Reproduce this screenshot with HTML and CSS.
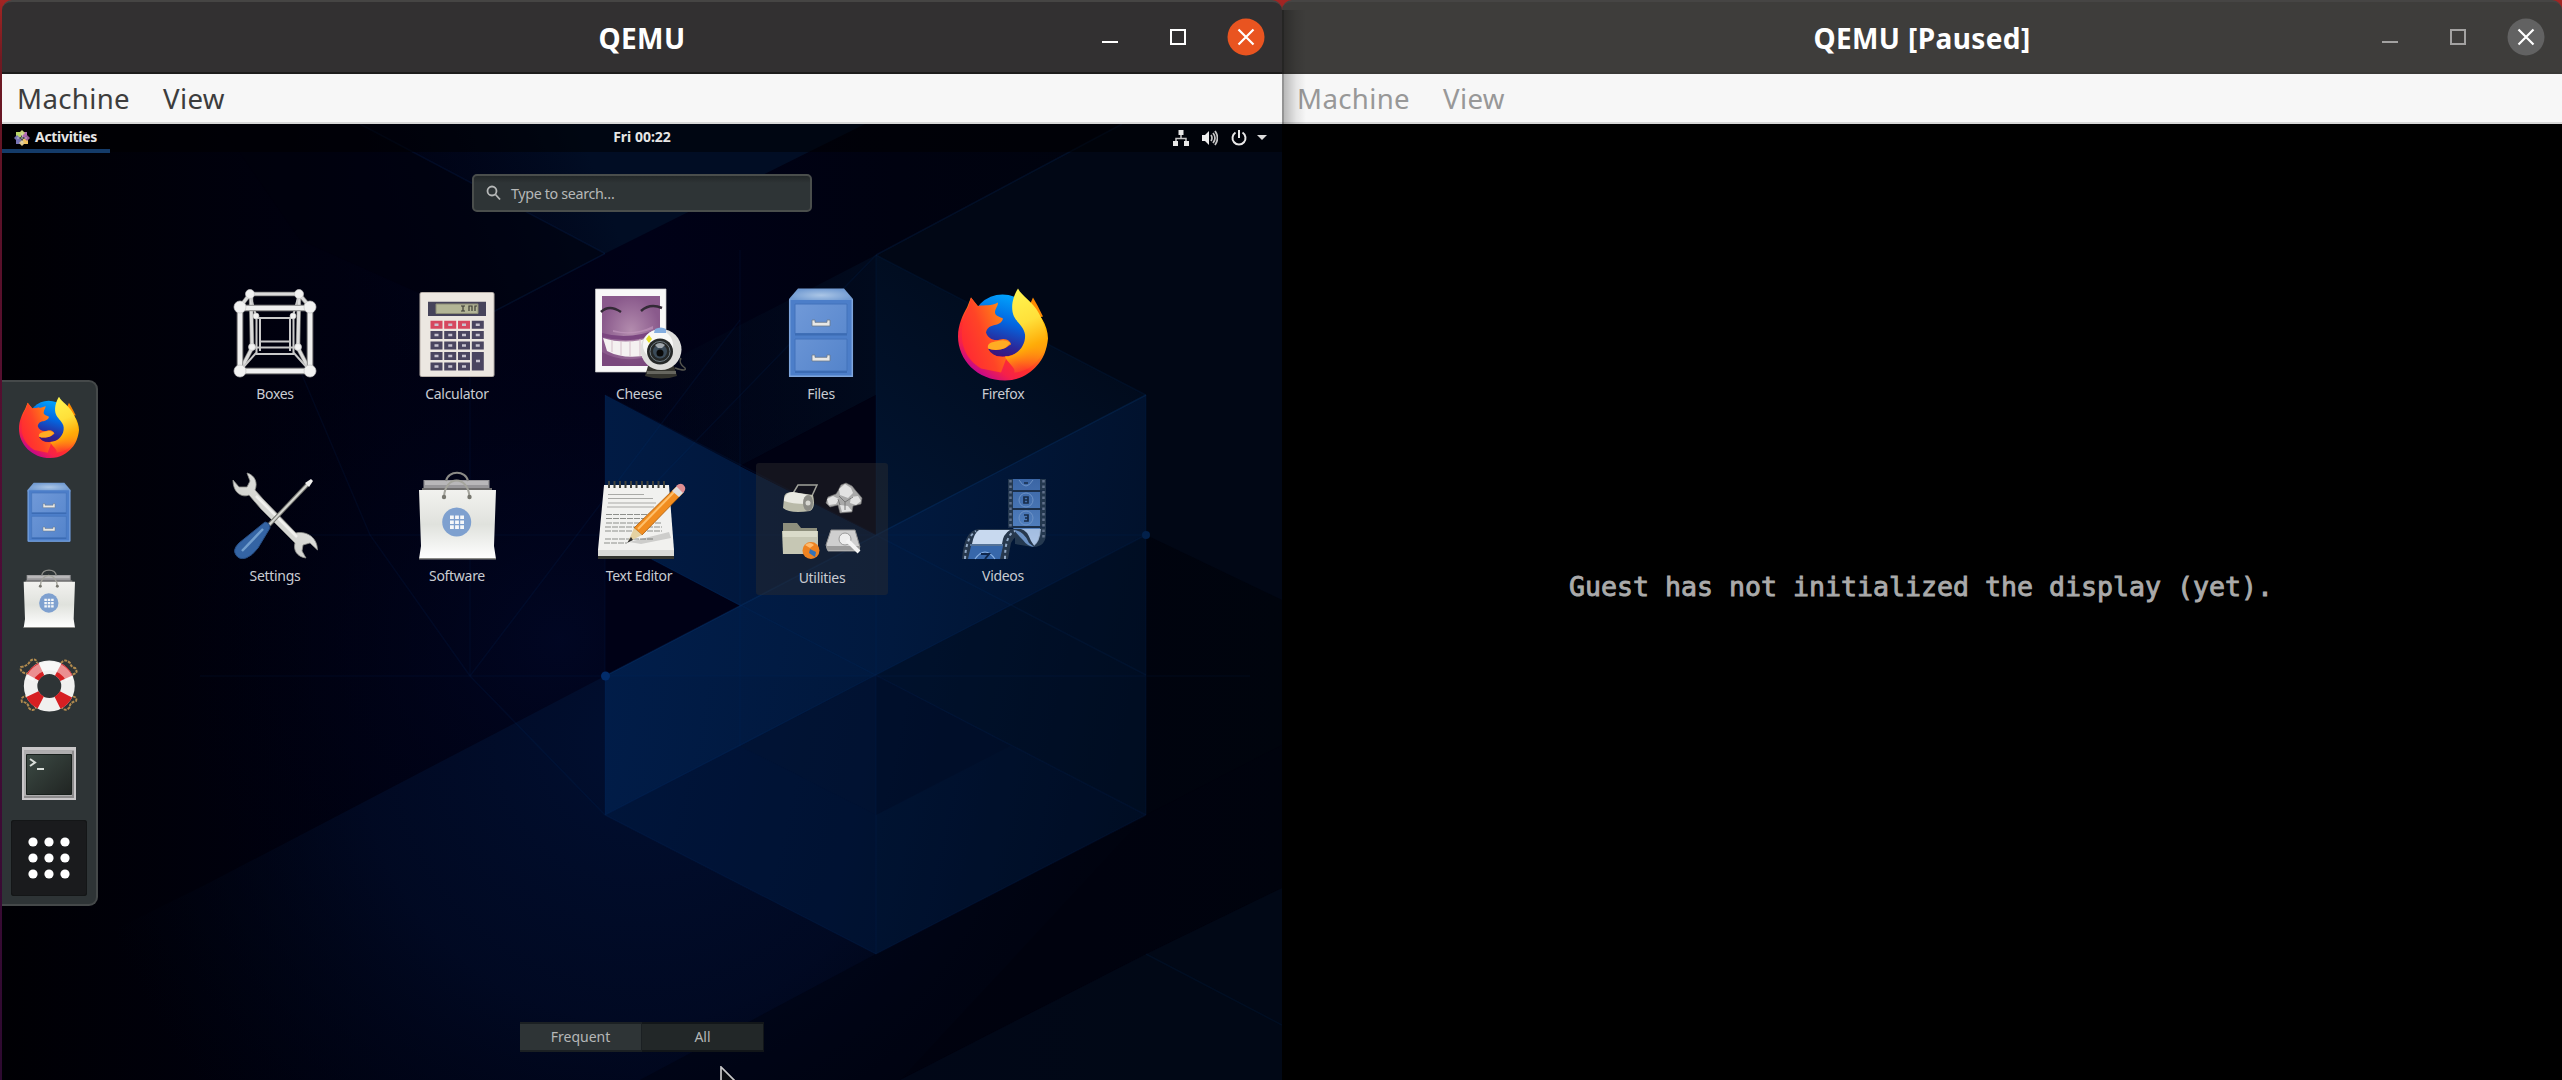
FILE: index.html
```html
<!DOCTYPE html>
<html lang="en">
<head>
<meta charset="utf-8">
<title>QEMU</title>
<link rel="stylesheet" href="styles.css">
</head>
<body>
<svg class="defs" width="0" height="0" aria-hidden="true">
  <defs>
    <linearGradient id="foxBody" x1="0.75" y1="0.1" x2="0.15" y2="0.85">
      <stop offset="0" stop-color="#ffc400"/><stop offset="0.3" stop-color="#ff9a0a"/><stop offset="0.62" stop-color="#ff2f2c"/><stop offset="0.82" stop-color="#f5204a"/><stop offset="1" stop-color="#c4098a"/>
    </linearGradient>
    <linearGradient id="foxFace" x1="0" y1="0.8" x2="1" y2="0.2">
      <stop offset="0" stop-color="#ff2436"/><stop offset="0.45" stop-color="#ff4426"/><stop offset="1" stop-color="#ff9a10"/>
    </linearGradient>
    <linearGradient id="foxTail" x1="0.4" y1="0" x2="0.6" y2="1">
      <stop offset="0" stop-color="#fff44f"/><stop offset="0.4" stop-color="#ffe03a"/><stop offset="0.7" stop-color="#ffac08"/><stop offset="1" stop-color="#ff8a12" stop-opacity="0"/>
    </linearGradient>
    <linearGradient id="globe" x1="0.7" y1="0" x2="0.4" y2="1">
      <stop offset="0" stop-color="#00a8ff"/><stop offset="0.45" stop-color="#0366e0"/><stop offset="0.8" stop-color="#2b2799"/><stop offset="1" stop-color="#3f1377"/>
    </linearGradient>
    <linearGradient id="drawer" x1="0" y1="0" x2="1" y2="1"><stop offset="0" stop-color="#7099d8"/><stop offset="1" stop-color="#5484cb"/></linearGradient>
    <radialGradient id="cabTop"><stop offset="0" stop-color="#abc6e6"/><stop offset="1" stop-color="#729bd2"/></radialGradient>
    <linearGradient id="bag" x1="0" y1="0" x2="0" y2="1"><stop offset="0" stop-color="#f2f2ef"/><stop offset="0.5" stop-color="#e0e2dd"/><stop offset="1" stop-color="#ffffff"/></linearGradient>
    <linearGradient id="steel" x1="0" y1="1" x2="1" y2="0"><stop offset="0" stop-color="#bcbdb8"/><stop offset="1" stop-color="#f3f3f1"/></linearGradient>
    <radialGradient id="cheese"><stop offset="0" stop-color="#b38cae"/><stop offset="1" stop-color="#8a5a8c"/></radialGradient>
    <linearGradient id="term" x1="0" y1="0" x2="1" y2="1"><stop offset="0" stop-color="#3c4a44"/><stop offset="1" stop-color="#202422"/></linearGradient>
    <linearGradient id="film" x1="0" y1="0" x2="0" y2="1"><stop offset="0" stop-color="#3b66a5"/><stop offset="0.7" stop-color="#4f7dbc"/><stop offset="1" stop-color="#88abd9"/></linearGradient>

    <symbol id="firefox" viewBox="0 1.5 96 96">
      <path fill="#ff8a00" d="M74 22 78 13 83 22 88 32 80 34z"/>
      <path fill="url(#foxBody)" d="M16 13 23 22.500C35 12 60 12 72 19 84 26 93 41 93 54 92 65 88 75 82 81 75 89 65 96 50 96 22 96 3 75 3 52 3 40 8 30 12 23z"/>
      <circle cx="47.500" cy="41" r="31" fill="url(#globe)"/>
      <path fill="url(#foxFace)" d="M16 13 23 21.500C30 20 36 22 43 18 43 22 40 24 40 28 40 31 44 32 48 34 47 39 42 40 38 41 34 42 32 44 31 48 33 54 39 57 45 55 51 53 56 57 56 60 53 61 52 64 45 65 40 66 36 65 33 64 36 70 43 74 52 72L46 88 26 84C10 74 6 60 7 45 8 35 9 29 13 23z"/>
      <path fill="#ffac23" d="M33 64C32 59 36 58 40 57 45 56 49 54 55.500 58.500 53 60 52 64 45 65 40 66 36 65 33 64z"/>
      <path fill="url(#foxTail)" d="M63 4C67 12 78 17 84 29 91 42 93 54 89 65 84 79 71 88 59 88 62 84 52 78 50 72 62 72 71 61 70 50 69 42 62 38 59 32 55 23 58 12 63 4z"/>
    </symbol>

    <symbol id="files" viewBox="0 0 96 96">
      <path fill="url(#cabTop)" d="M25 2.500h46l9 10.500v3H16v-3z"/>
      <path fill="#4c7ec9" d="M16 14h64v77H16z"/>
      <path fill="none" stroke="#7fa6dd" stroke-width="1.500" d="M16.700 13.500v76.700h62.600V13.500"/>
      <path fill="url(#drawer)" stroke="#4273bb" stroke-width="1" d="M22 18h52v29.500H22zM22 53h52v32H22z"/>
      <path stroke="#3c6cb4" stroke-width="2" d="M22 48.500h52M22 86h52"/>
      <path fill="#e8e8e6" stroke="#6c7889" stroke-width=".8" d="M39 34h3v2.300h12V34h3v6H39zM39 69h3v2.300h12V69h3v6H39z"/>
    </symbol>

    <symbol id="software" viewBox="0 0 96 96">
      <path fill="#98979a" d="M14.500 12h66v11h-66z"/><path fill="#b8b7b9" d="M16 13h63v4H16z"/>
      <path fill="none" stroke="#8b8b87" stroke-width="2" d="M37 13C39 2 57 2 59 13"/>
      <path fill="#6d6c6c" d="M13 20h70v3H13z"/>
      <path fill="url(#bag)" d="M10 22h77L85 78l2 13H10l2-13z"/>
      <path fill="#8c8c88" d="M10 90h77v1.500H10z"/>
      <circle cx="47.700" cy="54" r="14.500" fill="#7ea0cf"/>
      <path fill="#f5f7f9" d="M41 47.500h3.800v3.600H41zM46.100 47.500h3.800v3.600h-3.800zM51.200 47.500H55v3.600h-3.800zM41 52.400h3.800V56H41zM46.100 52.400h3.800V56h-3.800zM51.200 52.400H55V56h-3.800zM41 57.300h3.800v3.600H41zM46.100 57.300h3.800v3.600h-3.800zM51.200 57.300H55v3.600h-3.800z"/>
      <path fill="none" stroke="#a4a49c" stroke-width="2" d="M35 29C36 7 59 7 60.500 29"/>
      <circle cx="35" cy="29" r="2.200" fill="#77776f"/><circle cx="60.500" cy="29" r="2.200" fill="#77776f"/>
    </symbol>
  </defs>
</svg>

<div class="window active">
  <header class="titlebar">
    <span class="caption">QEMU</span>
    <div class="controls">
      <i class="min"></i><i class="max"></i>
      <svg class="close" viewBox="0 0 38 38"><circle cx="19" cy="19" r="18.500"/><path d="M11.500 11.500l15 15m0-15l-15 15"/></svg>
    </div>
  </header>
  <nav class="menubar"><span>Machine</span><span>View</span></nav>
  <main class="screen">
    <svg class="wallpaper" viewBox="2 124 1280 956" preserveAspectRatio="none">
      <defs>
        <linearGradient id="base" x1="0" y1="0" x2="1" y2="0"><stop offset="0" stop-color="#000004"/><stop offset="0.3" stop-color="#000112"/><stop offset="0.5" stop-color="#000117"/><stop offset="0.7" stop-color="#000210"/><stop offset="1" stop-color="#00040d"/></linearGradient>
        <radialGradient id="tint" gradientUnits="userSpaceOnUse" cx="560" cy="640" r="400"><stop offset="0" stop-color="#010724" stop-opacity=".9"/><stop offset="1" stop-color="#000110" stop-opacity="0"/></radialGradient>
        <radialGradient id="glow" gradientUnits="userSpaceOnUse" cx="640" cy="740" r="560"><stop offset="0" stop-color="#010f30"/><stop offset="0.5" stop-color="#010a24" stop-opacity=".9"/><stop offset="1" stop-color="#000614" stop-opacity="0"/></radialGradient>
        <linearGradient id="hex" gradientUnits="userSpaceOnUse" x1="605" y1="660" x2="1146" y2="780"><stop offset="0" stop-color="#011e4b"/><stop offset="0.5" stop-color="#01193e"/><stop offset="1" stop-color="#011029"/></linearGradient>
        <linearGradient id="band" gradientUnits="userSpaceOnUse" x1="605" y1="520" x2="876" y2="520"><stop offset="0" stop-color="#011b44"/><stop offset="1" stop-color="#011537"/></linearGradient>
        <linearGradient id="wing" gradientUnits="userSpaceOnUse" x1="820" y1="640" x2="1080" y2="300"><stop offset="0" stop-color="#011b42"/><stop offset="0.35" stop-color="#011430"/><stop offset="1" stop-color="#010a1a"/></linearGradient>
        <linearGradient id="topface" gradientUnits="userSpaceOnUse" x1="340" y1="300" x2="606" y2="200"><stop offset="0" stop-color="#000112" stop-opacity="0"/><stop offset="1" stop-color="#010d24"/></linearGradient>
        <linearGradient id="beam" gradientUnits="userSpaceOnUse" x1="600" y1="0" x2="876" y2="0"><stop offset="0" stop-color="#010a1d" stop-opacity="0"/><stop offset="1" stop-color="#010a1d"/></linearGradient>
      </defs>
      <path fill="url(#base)" d="M2 124h1280v956H2z"/>
      <path fill="url(#tint)" d="M2 124h1280v956H2z"/>
      <path fill="url(#glow)" d="M605 676L205 885 2 985V1080H900L1146 815 876 675z"/>
      <path fill="url(#topface)" d="M360 124H865L605 253.500 330 400 240 330 300 124z"/>
      <path fill="#00010c" d="M220 124H360L605 253.500 480 320 300 240z" opacity=".55"/>
      <path fill="#010715" d="M876 255L1122 124H1282V600L1146 535 876 395z"/>
      <path fill="url(#beam)" d="M605 395L876 255V395L740 466z"/>
      <path fill="url(#band)" d="M605 395L740 466 876 535 605 676 740 606 605 535z"/>
      <path fill="url(#wing)" d="M876 255L1146 395V535L876 676 605 676 876 535z"/>
      <path fill="#000112" d="M876 395L740 466 876 535z"/>
      <path fill="#000116" d="M605 535L740 606 605 676z"/>
      <path fill="url(#hex)" d="M605 676L876 535 1146 395V815L876 954 605 815z" opacity=".92"/>
      <path fill="#010f29" opacity=".55" d="M740 746L876 675 1010 746 876 815z"/>
      <path fill="#010a22" opacity=".35" d="M605 815L740 746 876 815V954z"/>
      <path fill="#010a1e" opacity=".3" d="M876 675L1146 815 876 954z"/>
      <path fill="#010a1a" opacity=".4" d="M1010 606L1146 535V815L876 675z"/>
      <path fill="#00020e" opacity=".5" d="M876 954L1146 815 1282 745V888L1146 954 900 1080H640z"/>
      <path fill="#010b1d" opacity=".6" d="M1146 954L1282 888V1080H900z"/>
      <g fill="none" stroke="#0b3a78" stroke-opacity=".3" stroke-width="1.500">
        <path d="M605 676L1146 395"/><path d="M360 124L605 253.500" opacity=".6"/><path d="M876 255L1122 124M430 345L605 253.500" opacity=".7"/>
        <path d="M200 676H1250M300 535H1146M605 395V815M876 255V954M1146 395V815M740 250V746M470 360V676" opacity=".35"/>
        <path d="M605 395L876 535 1146 675M876 255L1146 395M605 535L1146 815M605 815L1146 535M605 815L876 954 1146 815M470 676L740 320M470 676L370 535 300 370M605 535L876 255M470 676L605 815M1146 954L1282 1025" opacity=".4"/>
      </g>
      <circle cx="605.500" cy="676" r="4.500" fill="#022c6a"/><circle cx="1146" cy="535" r="4" fill="#02204a"/>
    </svg>

    <div class="topbar">
      <div class="activities">
        <svg class="logo" viewBox="0 0 16 16"><path fill="#b8d765" d="M2 2h5v5H2z"/><path fill="#b06ab2" d="M8 2h5v5H8z"/><path fill="#7774b4" d="M2 9h5v5H2z"/><path fill="#f1c25e" d="M9 9h5v5H9z"/><path fill="#c8d27c" d="M8 0l3 3-3 3-3-3z"/><path fill="#e0c88c" d="M8 10l3 3-3 3-3-3z"/><path fill="#7774b4" d="M0 8l3-3 3 3-3 3z"/><path fill="#9a5f9b" d="M10 8l3-3 3 3-3 3z"/><path stroke="#ddd" stroke-width=".7" d="M8 3v10M3 8h10"/></svg>
        <b>Activities</b>
      </div>
      <b class="clock">Fri 00:22</b>
      <div class="tray">
        <svg viewBox="0 0 16 16"><path fill="#e8e8e8" d="M5.500 0h5v5h-5zM0 11h5v5H0zM11 11h5v5h-5z"/><path fill="none" stroke="#c6c6c6" stroke-width="1.500" d="M8 5v3M3 11V8.500h10V11"/></svg>
        <svg viewBox="0 0 16 16"><path fill="#eee" d="M0 5h3l4-4v14l-4-4H0z"/><path fill="none" stroke="#c6c6c6" stroke-width="1.700" d="M9 5q2 3 0 6M11 3q4 5 0 10M13 1q5 7 0 14"/></svg>
        <svg viewBox="0 0 16 16"><path fill="none" stroke="#e8e8e8" stroke-width="2" d="M8 0v8M4.500 2.500a6.500 6.500 0 1 0 7 0"/></svg>
        <svg class="arrow" viewBox="0 0 10 16"><path fill="#ddd" d="M0 5h10l-5 5z"/></svg>
      </div>
    </div>

    <div class="overview">
      <aside class="dash">
        <span><svg><use href="#firefox"/></svg></span>
        <span><svg><use href="#files"/></svg></span>
        <span><svg><use href="#software"/></svg></span>
        <span><svg viewBox="0 0 64 64">
          <path fill="none" stroke="#b08a4e" stroke-width="2" stroke-dasharray="3 1" d="M12 20q-10-1-8-7 7-1 9-6 6-4 7 2M44 9q4-5 9 0 1 4 5 5 5 6-6 7M11 42q-8 0-6 6 6 0 7 6 4 5 8-2M52 42q9 0 7 5-7 2-6 6-5 6-9-1"/>
          <circle cx="32.300" cy="32" r="18.700" fill="none" stroke="#f0f0ef" stroke-width="13.500"/>
          <circle cx="32.300" cy="32" r="18.700" fill="none" stroke="#d61f22" stroke-width="13.500" stroke-dasharray="12 17.370" stroke-dashoffset="-8.700"/>
          <path fill="#fff" opacity=".5" d="M9 24A25 25 0 0 1 56 24l-7 3A18 18 0 0 0 16 27z"/>
        </svg></span>
        <span><svg viewBox="0 0 64 64"><path fill="#c9c7c9" d="M5 7h54v53H5z"/><path fill="#8b8a8b" d="M7 10.500h50V58H7z"/><path fill="#aeadae" d="M7 10.500h48V56H7z"/><path fill="url(#term)" stroke="#18201c" d="M9.500 14.500h45v40h-45z"/><path fill="none" stroke="#d9ded9" stroke-width="2" d="M13 19l5 3.500-5 3.500M20 29h7"/></svg></span>
        <span class="grid-button"><svg viewBox="0 0 64 64"><g fill="#fff"><circle cx="16" cy="16" r="4.600"/><circle cx="32" cy="16" r="4.600"/><circle cx="48" cy="16" r="4.600"/><circle cx="16" cy="32" r="4.600"/><circle cx="32" cy="32" r="4.600"/><circle cx="48" cy="32" r="4.600"/><circle cx="16" cy="48" r="4.600"/><circle cx="32" cy="48" r="4.600"/><circle cx="48" cy="48" r="4.600"/></g></svg></span>
      </aside>

      <section class="center">
        <div class="search"><svg viewBox="0 0 16 16"><circle cx="6" cy="6" r="4.500"/><path d="M9.500 9.500L14 14.500"/></svg><span>Type to search…</span></div>
        <div class="apps">
          <div class="app">
            <svg viewBox="0 0 96 96"><g fill="none" stroke="#777" stroke-width="4.500"><path d="M23 8h49M13 21L23 8M83 21L72 8M13 85L25 62M83 85L71 62M24 10L25 61M72 10L71 61"/></g>
              <g fill="none" stroke="#dcdcdc" stroke-width="3"><path d="M23 8h49M13 21L23 8M83 21L72 8M13 85L25 62M83 85L71 62M24 10L25 61M72 10L71 61"/></g>
              <g fill="none" stroke="#c9c9c9" stroke-width="2"><path d="M23 8l6 22M72 8l-6 22M13 85l17-19M83 85L66 66M29.500 30v37M33 32v33M66.500 30v37M63 32v33M29 32h37M25 61.500h46M29 68h38M32 55.500h32"/></g>
              <g fill="none" stroke="#9b9b9b" stroke-width="6.500"><path d="M13 22h70v63H13z"/></g><g fill="none" stroke="#efefef" stroke-width="4"><path d="M13 22h70v63H13z"/></g>
              <g fill="#f2f2f2" stroke="#c4c4c4" stroke-width=".7"><circle cx="13" cy="21" r="6"/><circle cx="83" cy="21" r="6"/><circle cx="13" cy="85" r="6"/><circle cx="83" cy="85" r="6"/><circle cx="23" cy="8" r="4.500"/><circle cx="72" cy="8" r="4.500"/><circle cx="29" cy="30" r="3"/><circle cx="66" cy="30" r="3"/><circle cx="25" cy="61" r="3.500"/><circle cx="71" cy="61" r="3.500"/></g></svg>
            <span>Boxes</span>
          </div>
          <div class="app">
            <svg viewBox="0 0 96 96"><rect x="11" y="6.500" width="74" height="84" rx="1.500" fill="#ece7e1" stroke="#b7afa9"/><path fill="#46435a" d="M19 15.700h58V30H19z"/><path fill="#b3b596" stroke="#8c8c75" d="M27 18h42v9.500H27z"/>
              <path fill="none" stroke="#3b3b35" stroke-width="1.200" d="M52 20h4M54 20v5M52 25h4M60 25v-5h3v5M66 25v-5h2"/>
              <g fill="#d6485f"><path d="M21.500 34.700h12v8h-12zM35.200 34.700h12v8h-12zM49 34.700h12v8H49z"/></g>
              <g fill="#4a4560"><path d="M62.800 34.700h12v8h-12zM21.500 45h12v8h-12zM35.200 45h12v8h-12zM49 45h12v8H49zM62.800 45h12v8h-12zM21.500 55.500h12v8h-12zM35.200 55.500h12v8h-12zM49 55.500h12v8H49zM62.800 55.500h12v8h-12zM21.500 66h12v8h-12zM35.200 66h12v8h-12zM49 66h12v8H49zM62.800 66h12v18.500h-12zM21.500 76.500h12v8h-12zM35.200 76.500h12v8h-12zM49 76.500h12v8H49z"/></g>
              <path stroke="#c8c3d0" stroke-width="2.500" stroke-dasharray="4 9.750" d="M25.500 38.700H75M25.500 49H75M25.500 59.500H75M25.500 70H60M25.500 80.500H60M67 75h4"/></svg>
            <span>Calculator</span>
          </div>
          <div class="app">
            <svg viewBox="0 0 96 96"><path fill="#f8f8f8" stroke="#c9c9c9" stroke-width=".7" d="M4.500 3H75v83H4.500z"/><path fill="url(#cheese)" d="M11 10h58v70H11z"/>
              <path fill="#7b4680" d="M11 47q28 8 58-5v5q-28 12-58 4z"/><path fill="#c49ac0" d="M22 44q20 6 40-4v3q-20 7-40 3z" opacity=".6"/>
              <path fill="#f4f1f1" d="M12 52q25 8 52-2l-6 19q-25 5-42-4z"/><path stroke="#d5bfca" stroke-width="1" d="M21 54v12M30 55v14M39 55v15M49 53v17"/>
              <path fill="#6d3b71" d="M11 66q20 12 48 4l-3 10H11z" opacity=".55"/>
              <path fill="none" stroke="#332a36" stroke-width="2.500" d="M10 26q8-8 20 0M50 25q9-8 21-3"/>
              <path fill="none" stroke="#55564f" stroke-width="1.500" d="M84 82q12 4 10 0-7-5-4-10"/><path fill="#35352f" d="M57 80h26l3 10q-15 5-32 0z"/><path fill="#66665f" d="M56 85h29v3H56z"/>
              <circle cx="70" cy="63.500" r="20.500" fill="#dededc"/><circle cx="67" cy="59" r="15" fill="#f8f8f7"/><circle cx="69" cy="65.500" r="13" fill="#252828"/><circle cx="69" cy="65.500" r="10" fill="none" stroke="#6f7b83"/><circle cx="69" cy="65.500" r="7" fill="#3a4a58"/><circle cx="69" cy="67" r="3.500" fill="#090909"/><path fill="#a1a8ae" d="M64 59q5-4 10 0l-3 3h-4z"/>
              <path fill="#84aee0" d="M64 43q6-3 11 0v4H63z"/><path fill="#e6e02b" d="M58 49l3 4-3 4-3-4z"/></svg>
            <span>Cheese</span>
          </div>
          <div class="app"><svg><use href="#files"/></svg><span>Files</span></div>
          <div class="app"><svg><use href="#firefox"/></svg><span>Firefox</span></div>

          <div class="app">
            <svg viewBox="0 0 96 96"><path fill="url(#steel)" stroke="#8f908b" stroke-width=".8" d="M20 5C28 7 31 15 28 22L36 31 69 65C77 63 90 67 90.500 82L83 75 76 77 75 83 79 90C70 89 66 82 68 75L34 41 22 27C15 30 6 25 6 12L12 19 20 19 23 13z"/>
              <path fill="none" stroke="#f7f7f5" stroke-width="2.500" opacity=".8" d="M29 28L70 69"/>
              <path stroke="#74756f" stroke-width="4" d="M42 57L80 17"/><path stroke="#d5d6d1" stroke-width="2" d="M42 57L81 16"/><path fill="#f0f0ee" d="M78 15l6-4 2 2-4 6z"/>
              <path fill="#3464a4" stroke="#264d83" d="M38 54q5 1 5 6L31 80q-6 8-12 10-7 2-10-3-4-5 3-12z"/><path stroke="#729fcf" stroke-width="2.500" d="M36 61L15 83"/></svg>
            <span>Settings</span>
          </div>
          <div class="app"><svg><use href="#software"/></svg><span>Software</span></div>
          <div class="app">
            <svg viewBox="0 0 96 96"><path fill="#b5b6b2" d="M7 82h76v7H7z"/><path fill="#34352f" d="M7 88h76v3H7z"/><path fill="#f1f1ef" d="M13 17h65l5 65H7z"/><path fill="#dadad6" d="M7 82h76v6H7z"/>
              <path fill="none" stroke="#41423d" stroke-width="2" d="M18 20v-7M23.500 20v-7M29 20v-7M34.500 20v-7M40 20v-7M45.500 20v-7M51 20v-7M56.500 20v-7M62 20v-7M67.500 20v-7M73 20v-7"/>
              <g stroke="#a9aaa7" stroke-width="1.200"><path d="M17 26.500h36M17 30.500h45M17 35h48M16 39h47"/></g><g stroke="#8d8f8b" stroke-width="1.200" stroke-dasharray="6 1"><path d="M15 46.500h42M15 50.500h50M15 55h55M14 59h57M14 63h57M14 71h48M13 75h23"/></g>
              <path fill="#000" opacity=".15" d="M38 74L78 64 80 70 50 76z"/>
              <path fill="#f18d20" stroke="#a95a09" stroke-width=".8" d="M85 19l7 6-41 42-8-7z"/><path stroke="#ffc06b" stroke-width="2" d="M84 23L47 61"/><path fill="#e5d2a2" d="M43 60l8 7-12 6-2 1z"/><path fill="#303030" d="M40 69l2 3-6 3z"/><path fill="#ddd" d="M81 23l5-5 7 6-5 5z"/><path fill="#df8d91" d="M85 18q6-5 9 1 1 3-2 6z"/></svg>
            <span>Text Editor</span>
          </div>
          <div class="app folder">
            <svg viewBox="0 0 132 90"><path fill="none" stroke="#a0a19a" stroke-width="1.500" d="M36 32l6-10h19l-6 13"/><path fill="#b9baa9" d="M28 35q0-6 8-6l21 3q3 13-3 16-20 3-27-3z"/><path fill="#e9e9e2" d="M28 36q2-7 9-7l16 3q-3 3-3 9-14 0-22-3z"/><ellipse cx="52" cy="40" rx="5" ry="8" fill="#8c8c86"/><circle cx="52" cy="40" r="2.500" fill="#d8d8d2"/>
              <path fill="#a9a9a9" stroke="#747474" stroke-width=".6" d="M82 28l3-6 5-2 6 3 4 5 6 7-1 6-8 2-1 6-12 1-2-8-8 2-4-4 2-6 8-3z"/><path fill="#e2e2e2" d="M83 26l6-5 6 4 2 5-5 5-8-3zM71 36l6-3 6 3-3 5-7 1zM95 34l7-1 3 5-5 4-6-2zM84 42l8 1 4 5-10 1z"/><path fill="none" stroke="#777" stroke-width="1" d="M83 33l6 6v8M89 39l8-5M82 36l2 6"/>
              <path fill="#8e8f7d" d="M27 60h14l4 5h16v8H27z"/><path fill="#c6c7b4" d="M26 68h36v23H27z"/><path fill="#dadbca" d="M27 68h34v6H27z"/><circle cx="55" cy="87.500" r="8.500" fill="#ee8220"/><path fill="#3472b7" d="M54 86l6 3-1 5-6-4z"/><path fill="#ffba6c" d="M49 82q5-4 9 0l-4 3z"/>
              <path fill="#cfcfcf" stroke="#8e8e8e" d="M75 67h24l5 17-3 4H72l-2-6z"/><path fill="#9b9b9b" d="M70 83h34v4H71z"/><circle cx="89" cy="76" r="6" fill="#eee" stroke="#999"/><path stroke="#f4f4f4" stroke-width="4" d="M91 77l12 12"/></svg>
            <span>Utilities</span>
          </div>
          <div class="app">
            <svg viewBox="0 0 96 96"><path fill="#24384f" d="M53 11h38v52q1 16-13 16L60 76V60h-7z"/><path fill="url(#film)" d="M58 11h27v50q-1 13-7 17-9-3-20-18z"/>
              <path stroke="#1b2f4a" stroke-width="1.800" d="M53 23h37M53 41h37M53 59h37"/><g stroke="#60708a" stroke-width="2.500" stroke-dasharray="2.500 3"><path d="M55.500 12v47M88.500 12v60"/></g>
              <g fill="none" stroke="#6c92c6" stroke-width="1"><circle cx="71" cy="32" r="7"/><circle cx="71" cy="50" r="7"/><path d="M64 12q7 12 14 0"/></g><path fill="none" stroke="#172c4a" stroke-width="1.700" d="M69 15h4M69 29h4v6h-4zv3h4M69 47h4v6h-4M70 50h3"/>
              <path fill="#b5cbe8" d="M60 61h26q-1 13-7 17-9-4-19-17z" opacity=".8"/>
              <path fill="#27384d" d="M7 91Q9 62 24 61H66Q72 62 76 73L80 79 71 75Q64 61 56 75L53 91z"/>
              <path fill="#c8d9ef" d="M24 62h31q-7 4-8 14H17q2-11 7-14z"/><path fill="#3767aa" d="M16 78h32l-3 13H13z"/><path fill="#6b91c4" d="M59 62q10 1 15 13l5 4q-7-1-11-7-6-6-9-10z"/>
              <path stroke="#91a8c5" stroke-width="2" stroke-dasharray="3 3" fill="none" d="M10 91Q11 69 21 63M50 91Q50 67 60 63"/><path fill="none" stroke="#85aee2" stroke-width="1.200" d="M20 91q10-14 20 0M15 77h33"/><path fill="none" stroke="#0f274d" stroke-width="2" d="M26 86h8l-4 5"/></svg>
            <span>Videos</span>
          </div>
        </div>
        <div class="switcher"><span>Frequent</span><span class="on">All</span></div>
      </section>
    </div>
    <svg class="cursor" viewBox="0 0 18 26"><path fill="#0b0d12" stroke="#c9c9c9" stroke-width="1.700" d="M1 1v22l5-5 4 9 4-2-4-8h7z"/></svg>
  </main>
</div>

<div class="window paused">
  <header class="titlebar">
    <span class="caption">QEMU [Paused]</span>
    <div class="controls">
      <i class="min"></i><i class="max"></i>
      <svg class="close" viewBox="0 0 38 38"><circle cx="19" cy="19" r="18.500"/><path d="M11.500 11.500l15 15m0-15l-15 15"/></svg>
    </div>
  </header>
  <nav class="menubar"><span>Machine</span><span>View</span></nav>
  <main class="screen blank"><p>Guest has not initialized the display (yet).</p></main>
</div>
</body>
</html>
```
FILE: styles.css
```css
* { box-sizing: border-box; }
body {
  margin: 0;
  width: 2562px;
  height: 1080px;
  padding-left: 2px;
  display: flex;
  overflow: hidden;
  background: linear-gradient(#a32523 0, #701a22 60px, #5c1128 200px, #4b0c38 600px, #2d0a31 1080px);
  font-family: "Noto Sans", "Open Sans", sans-serif;
}
.defs { position: absolute; }
.window { width: 1280px; flex: none; display: flex; flex-direction: column; }

.titlebar {
  position: relative;
  height: 74px;
  flex: none;
  display: grid;
  grid-template-columns: 1fr auto 1fr;
  align-items: center;
  border-top: 2px solid #464544;
  border-bottom: 2px solid #1d1c1c;
  border-radius: 10px 10px 0 0;
  background: #323031;
}
.caption { grid-column: 2; font-size: 28px; font-weight: 700; line-height: 38px; letter-spacing: .4px; color: #fff; padding-top: 1px; }
.controls { grid-column: 3; justify-self: end; display: flex; align-items: center; padding-right: 17px; }
.min { width: 16px; height: 2px; background: #fff; margin: 10px 52px 0 0; }
.max { width: 16px; height: 16px; border: 2px solid #fff; margin-right: 41px; }
.close { width: 38px; height: 38px; display: block; }
.close circle { fill: #e95420; }
.close path { stroke: #fff; stroke-width: 2.2; }

.menubar {
  height: 50px;
  flex: none;
  display: flex;
  gap: 33px;
  padding: 4px 15px 0;
  background: #f7f7f7;
  border-bottom: 2px solid #d8d8d8;
  color: #3d3d3d;
  font-size: 27.6px;
  line-height: 40px;
  letter-spacing: .35px;
}

.paused { position: relative; }
.paused::before {
  content: "";
  position: absolute;
  z-index: 2;
  inset: 10px auto auto 0;
  width: 24px;
  height: 114px;
  background: linear-gradient(90deg, rgba(0,0,0,.4) 0 2px, rgba(0,0,0,.25) 2px, rgba(0,0,0,.08) 14px, transparent);
}
.paused .titlebar { background: #3e3d3b; border-bottom-color: #3a3937; }
.paused .min { background: #a3a2a1; }
.paused .max { border-color: #a3a2a1; }
.paused .close circle { fill: #626262; }
.paused .menubar { color: #989898; }

.screen { position: relative; flex: 1; overflow: hidden; background: #000; }
.blank { padding-top: 445px; }
.blank p {
  margin: 0 2px 0 0;
  text-align: center;
  white-space: nowrap;
  font: 26.58px/36px "DejaVu Sans Mono", monospace;
  color: #aaa;
  -webkit-text-stroke: .9px #aaa;
}

.wallpaper { position: absolute; inset: 0; width: 1280px; height: 956px; }
.topbar {
  position: relative;
  height: 28px;
  display: grid;
  grid-template-columns: 1fr auto 1fr;
  background: rgba(0,0,0,.5);
  color: #e6e6e6;
  font-size: 14px;
  line-height: 25px;
  letter-spacing: -.3px;
}
.clock { letter-spacing: 0; }
.activities { width: 108px; display: flex; gap: 5px; padding: 0 0 0 12px; border-bottom: 4px solid #143b69; }
.logo { width: 16px; height: 16px; margin-top: 6px; }
.tray { justify-self: end; display: flex; gap: 13px; padding: 6px 15px 0 0; }
.tray svg { width: 16px; height: 16px; }
.tray .arrow { width: 10px; margin-left: -3px; }

.overview { position: relative; height: 928px; display: grid; grid-template-columns: 96px 1fr 96px; }
.dash {
  height: 526px;
  margin-top: 228px;
  padding: 7px 10px 8px 9px;
  display: flex;
  flex-direction: column;
  justify-content: space-between;
  background: #2e3436;
  border: 2px solid #45494a;
  border-left: 0;
  border-radius: 0 9px 9px 0;
}
.dash span { width: 76px; height: 76px; padding: 6px; border-radius: 3px; }
.dash svg { display: block; width: 64px; height: 64px; }
.grid-button { background: #1a1b1d; box-shadow: inset 0 0 0 1px #141617; }

.center { display: flex; flex-direction: column; align-items: center; padding: 22px 0 28px; }
.search {
  width: 340px;
  height: 38px;
  flex: none;
  display: flex;
  align-items: center;
  gap: 9px;
  padding-left: 12px;
  border: 2px solid #4a4e4c;
  border-radius: 5px;
  background: linear-gradient(#232829, #2e3436 7px);
  color: #b6b8b8;
  font-size: 14.3px;
  letter-spacing: -.35px;
}
.search svg { width: 16px; height: 16px; fill: none; stroke: #b6b8b8; stroke-width: 1.8; }
.apps {
  display: grid;
  grid-template-columns: repeat(5, 182px);
  grid-auto-rows: 182px;
  margin: 74px 6px 0 0;
}
.app {
  display: flex;
  flex-direction: column;
  align-items: center;
  color: #c9ccd2;
  font-size: 14px;
  line-height: 20px;
  letter-spacing: -.3px;
}
.app svg { width: 96px; height: 96px; display: block; margin-bottom: 2px; }
.folder { width: 132px; height: 132px; margin: -5px 0 0 26px; background: rgba(44,44,46,.45); border-radius: 3px; }
.app.folder svg { width: 132px; height: 90px; margin-bottom: 15px; overflow: visible; }
.switcher { margin-top: auto; display: flex; width: 244px; height: 30px; font-size: 14px; line-height: 26px; text-align: center; color: #b5b7b7; }
.switcher span { flex: 1; background: #2e3436; border: solid #1b2023; border-width: 2px 1px 2px 0; }
.switcher .on { background: #222728; border-color: #121619; }
.cursor { position: absolute; left: 718px; top: 942px; width: 18px; height: 26px; }
```
